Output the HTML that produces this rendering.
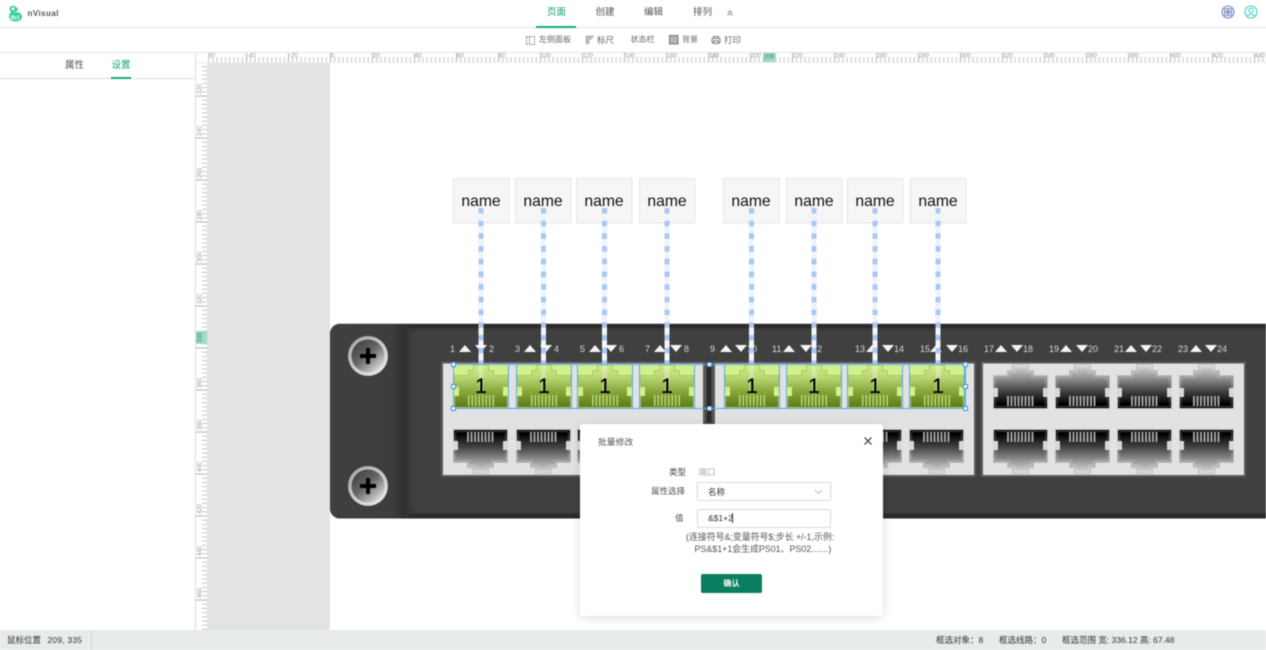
<!DOCTYPE html>
<html lang="zh"><head><meta charset="utf-8"><title>nVisual</title>
<style>
*{box-sizing:border-box}
html,body{margin:0;padding:0;width:1266px;height:650px;overflow:hidden;background:#fff}
body{font-family:"Liberation Sans","Noto Sans CJK SC",sans-serif;position:relative;color:#555}
.a{position:absolute;white-space:nowrap;line-height:1}
#wrap{position:absolute;left:0;top:0;width:1266px;height:650px;filter:blur(.45px);overflow:hidden}
</style></head><body><div id="wrap">

<svg class="a" style="left:0;top:0" width="1266" height="650" viewBox="0 0 1266 650" font-family="Liberation Sans, Noto Sans CJK SC, sans-serif">
<defs>
<pattern id="tT" x="330" y="0" width="4.2" height="10" patternUnits="userSpaceOnUse"><rect width="1" height="10" fill="#c4c4c4"/></pattern>
<pattern id="tTL" x="330" y="0" width="42" height="10" patternUnits="userSpaceOnUse"><rect width="1" height="10" fill="#b4b4b4"/></pattern>
<pattern id="tL" x="0" y="95.5" width="10" height="4.2" patternUnits="userSpaceOnUse"><rect width="10" height="1" fill="#c4c4c4"/></pattern>
<pattern id="tLL" x="0" y="95.5" width="11" height="42" patternUnits="userSpaceOnUse"><rect width="11" height="1" fill="#b4b4b4"/></pattern>
<linearGradient id="gd" x1="0" y1="0" x2="0" y2="1"><stop offset="0" stop-color="#dedede"/><stop offset=".25" stop-color="#a0a0a0"/><stop offset=".6" stop-color="#444"/><stop offset=".9" stop-color="#000"/><stop offset="1" stop-color="#000"/></linearGradient>
<linearGradient id="gg" x1="0" y1="0" x2="0" y2="1"><stop offset="0" stop-color="#d0ee88"/><stop offset=".3" stop-color="#b9d672"/><stop offset=".65" stop-color="#83a337"/><stop offset="1" stop-color="#5a7a14"/></linearGradient>
<linearGradient id="lp" x1="0" y1="0" x2="1" y2="0"><stop offset="0" stop-color="#404040"/><stop offset=".78" stop-color="#3d3d3d"/><stop offset=".93" stop-color="#303030"/><stop offset="1" stop-color="#333"/></linearGradient>
<linearGradient id="sc" x1=".15" y1=".1" x2=".85" y2=".9"><stop offset="0" stop-color="#444"/><stop offset=".45" stop-color="#666"/><stop offset="1" stop-color="#d8d8d8"/></linearGradient>
<linearGradient id="sr" x1=".1" y1="0" x2=".9" y2="1"><stop offset="0" stop-color="#a5a5a5"/><stop offset="1" stop-color="#eee"/></linearGradient>
<symbol id="pd" width="55" height="45" viewBox="0 0 55 45" overflow="visible">
<path d="M.5 11.500H14.500V6.500H19.500V.5H35.500V6.500H40.500V11.500H54.500V44.500H.5Z" fill="url(#gd)" stroke="#c0c0c0"/>
<path d="M2.500 13.500H16.500V8.500H21.500V2.500H33.500V8.500H38.500V13.500H52.500V42.500H2.500Z" fill="none" stroke="#fff" stroke-opacity=".22"/>
<path d="M14 32h2v10h-2zM17.500 32h2v10h-2zM21 32h2v10h-2zM24.500 32h2v10h-2zM28 32h2v10h-2zM31.500 32h2v10h-2zM35 32h2v10h-2zM38.500 32h2v10h-2z" fill="#a0a0a0"/>
<rect x="0" y="24" width="5" height="9" fill="#d8d8d8"/><rect x="50" y="24" width="5" height="9" fill="#d8d8d8"/>
</symbol>
<symbol id="pg" width="56" height="45" viewBox="0 0 56 45" overflow="visible">
<rect x=".5" y=".5" width="55" height="43.500" fill="#d0f28a" stroke="#5aa9ee"/>
<path d="M1.500 11.500H15.500V6.500H20.500V1H35.500V6.500H40.500V11.500H54.500V43.500H1.500Z" fill="url(#gg)" stroke="#a9c76a"/>
<path d="M15 31h1.500v11H15zM18.500 31H20v11h-1.500zM22 31h1.500v11H22zM25.500 31H27v11h-1.500zM29 31h1.500v11H29zM32.500 31H34v11h-1.500zM36 31h1.500v11H36zM39.500 31H41v11h-1.500z" fill="#b8d578"/>
<rect x="1" y="23" width="5" height="9" fill="#d3f28c"/><rect x="50" y="23" width="5" height="9" fill="#d3f28c"/>
</symbol>
<symbol id="sw" width="42" height="42" viewBox="0 0 42 42">
<circle cx="21" cy="21" r="20" fill="url(#sr)" stroke="#777" stroke-width=".5"/>
<circle cx="21" cy="21" r="16.500" fill="url(#sc)"/>
<rect x="13" y="19" width="16" height="4" fill="#000"/><rect x="19" y="13" width="4" height="16" fill="#000"/>
</symbol>
<symbol id="nm" width="57" height="46" viewBox="0 0 57 46">
<rect x=".5" y=".5" width="55.500" height="44.500" fill="#f6f6f6" stroke="#e6e6e6"/>
<text x="28" y="28" font-size="15.700" text-anchor="middle" fill="#111">name</text>
</symbol>
<symbol id="up" width="12" height="7" viewBox="0 0 12 7"><path d="M6 0L12 7H0Z" fill="#f4f4f4"/></symbol>
<symbol id="dn" width="12" height="7" viewBox="0 0 12 7"><path d="M0 0H12L6 7Z" fill="#f4f4f4"/></symbol>
<rect id="hd" x="-2" y="-2" width="4" height="4" fill="#fff" stroke="#2f93ea" stroke-width="1"/>
</defs>

<!-- grey canvas -->
<rect x="207" y="62" width="123" height="568" fill="#e3e3e3"/>

<!-- top ruler -->
<rect x="196" y="52" width="1070" height="10" fill="#fff"/>
<rect x="207" y="57" width="1059" height="5" fill="url(#tT)"/>
<rect x="207" y="52" width="1059" height="10" fill="url(#tTL)"/>
<rect x="763" y="52" width="13" height="10" fill="#9fdcc0"/>
<g font-size="6" fill="#999">
<text x="208" y="57.500">60</text><text x="247" y="57.500">-40</text><text x="289" y="57.500">-20</text><text x="331" y="57.500">0</text><text x="373" y="57.500">20</text><text x="415" y="57.500">40</text><text x="457" y="57.500">60</text><text x="499" y="57.500">80</text><text x="541" y="57.500">100</text><text x="583" y="57.500">120</text><text x="625" y="57.500">140</text><text x="667" y="57.500">160</text><text x="709" y="57.500" fill="#777">180</text><text x="751" y="57.500">200</text><text x="764" y="58.500" fill="#3c8a6c">209</text><text x="793" y="57.500">220</text><text x="835" y="57.500">240</text><text x="877" y="57.500">260</text><text x="919" y="57.500">280</text><text x="961" y="57.500">300</text><text x="1003" y="57.500">320</text><text x="1045" y="57.500">340</text><text x="1087" y="57.500">360</text><text x="1129" y="57.500">380</text><text x="1171" y="57.500">400</text><text x="1213" y="57.500">420</text><text x="1255" y="57.500">440</text>
</g>
<rect x="196" y="62" width="1070" height="1" fill="#ececec"/>

<!-- left ruler -->
<rect x="202" y="63" width="5" height="567" fill="url(#tL)"/>
<rect x="196" y="63" width="11" height="567" fill="url(#tLL)"/>
<rect x="196" y="331" width="11" height="13" fill="#9fdcc0"/>
<g font-size="6" fill="#999" text-anchor="middle">
<text transform="translate(201.500,89) rotate(-90)">220</text>
<text transform="translate(201.500,131) rotate(-90)">240</text>
<text transform="translate(201.500,173) rotate(-90)">260</text>
<text transform="translate(201.500,215) rotate(-90)">280</text>
<text transform="translate(201.500,257) rotate(-90)">300</text>
<text transform="translate(201.500,299) rotate(-90)">320</text>
<text transform="translate(201.500,337.500) rotate(-90)" fill="#3c8a6c">335</text>
<text transform="translate(201.500,383) rotate(-90)">360</text>
<text transform="translate(201.500,425) rotate(-90)">380</text>
<text transform="translate(201.500,467) rotate(-90)">400</text>
<text transform="translate(201.500,509) rotate(-90)">420</text>
<text transform="translate(201.500,551) rotate(-90)">440</text>
<text transform="translate(201.500,593) rotate(-90)">460</text>
</g>
<rect x="195" y="52" width="1" height="578" fill="#dedede"/>

<!-- rack -->
<path d="M1266 323.500H340a10 10 0 0 0-10 10V508a10 10 0 0 0 10 10.500H1266Z" fill="#2b2b2b"/>
<path d="M1266 328H408V514H1266Z" fill="#383838"/>
<path d="M408 324H340a10 10 0 0 0-10 10V508a10 10 0 0 0 10 10.500H408Z" fill="url(#lp)"/>
<path d="M1266 323.500H340a10 10 0 0 0-10 10v.5a10 10 0 0 1 10-10H1266Z" fill="#9a9a9a"/>
<path d="M1266 330H419a8 8 0 0 0-8 8V504a8 8 0 0 0 8 8H1266Z" fill="#404040"/>
<use href="#sw" x="347" y="335"/><use href="#sw" x="347" y="465"/>

<!-- port blocks -->
<rect x="442" y="362.500" width="262" height="113.500" fill="#e2e2e2" stroke="#5a5a5a" stroke-width="2"/>
<rect x="714" y="362.500" width="261" height="113.500" fill="#e2e2e2" stroke="#5a5a5a" stroke-width="2"/>
<rect x="982" y="362.500" width="263" height="113.500" fill="#e2e2e2" stroke="#5a5a5a" stroke-width="2"/>
<rect x="704" y="362" width="10" height="60" fill="#555"/>
<rect x="706.500" y="362" width="5" height="60" fill="#2b2b2b"/>

<!-- green ports -->
<use href="#pg" x="453" y="364"/><use href="#pg" x="516" y="364"/><use href="#pg" x="577" y="364"/><use href="#pg" x="639" y="364"/>
<use href="#pg" x="724" y="364"/><use href="#pg" x="786" y="364"/><use href="#pg" x="847" y="364"/><use href="#pg" x="909" y="364"/>
<!-- dark top ports -->
<use href="#pd" x="993" y="364"/><use href="#pd" x="1055" y="364"/><use href="#pd" x="1117" y="364"/><use href="#pd" x="1179" y="364"/>
<!-- dark bottom ports -->
<g transform="translate(0,903) scale(1,-1)">
<use href="#pd" x="453" y="429"/><use href="#pd" x="516" y="429"/><use href="#pd" x="577" y="429"/><use href="#pd" x="639" y="429"/>
<use href="#pd" x="724" y="429"/><use href="#pd" x="786" y="429"/><use href="#pd" x="847" y="429"/><use href="#pd" x="909" y="429"/>
<use href="#pd" x="993" y="429"/><use href="#pd" x="1055" y="429"/><use href="#pd" x="1117" y="429"/><use href="#pd" x="1179" y="429"/>
</g>

<!-- labels -->
<g font-size="9" fill="#d8d8d8">
<text x="450" y="352">1</text><text x="489" y="352">2</text>
<text x="515" y="352">3</text><text x="554" y="352">4</text>
<text x="580" y="352">5</text><text x="619" y="352">6</text>
<text x="645" y="352">7</text><text x="684" y="352">8</text>
<text x="710" y="352">9</text><text x="747" y="352">10</text>
<text x="772" y="352">11</text><text x="812" y="352">12</text>
<text x="855" y="352">13</text><text x="894" y="352">14</text>
<text x="920" y="352">15</text><text x="958" y="352">16</text>
<text x="984" y="352">17</text><text x="1023" y="352">18</text>
<text x="1049" y="352">19</text><text x="1088" y="352">20</text>
<text x="1114" y="352">21</text><text x="1152" y="352">22</text>
<text x="1178" y="352">23</text><text x="1217" y="352">24</text>
</g>
<use href="#up" x="459" y="345"/><use href="#dn" x="475" y="345"/>
<use href="#up" x="524" y="345"/><use href="#dn" x="540" y="345"/>
<use href="#up" x="589" y="345"/><use href="#dn" x="605" y="345"/>
<use href="#up" x="654" y="345"/><use href="#dn" x="670" y="345"/>
<use href="#up" x="720" y="345"/><use href="#dn" x="735" y="345"/>
<use href="#up" x="783" y="345"/><use href="#dn" x="800" y="345"/>
<use href="#up" x="866" y="345"/><use href="#dn" x="882" y="345"/>
<use href="#up" x="930" y="345"/><use href="#dn" x="946" y="345"/>
<use href="#up" x="995" y="345"/><use href="#dn" x="1011" y="345"/>
<use href="#up" x="1060" y="345"/><use href="#dn" x="1076" y="345"/>
<use href="#up" x="1125" y="345"/><use href="#dn" x="1140" y="345"/>
<use href="#up" x="1190" y="345"/><use href="#dn" x="1205" y="345"/>

<!-- name boxes -->
<use href="#nm" x="453" y="178"/><use href="#nm" x="515" y="178"/><use href="#nm" x="576" y="178"/><use href="#nm" x="639" y="178"/>
<use href="#nm" x="723" y="178"/><use href="#nm" x="786" y="178"/><use href="#nm" x="847" y="178"/><use href="#nm" x="910" y="178"/>

<!-- links -->
<g stroke-width="5" fill="none">
<g stroke="#eef4fd">
<path d="M481 208V324M543.500 208V324M604.500 208V324M667 208V324M751.500 208V324M814 208V324M875 208V324M938 208V324"/>
</g>
<g stroke="#fff" stroke-opacity=".95">
<path d="M481 324V364M543.500 324V364M604.500 324V364M667 324V364M751.500 324V364M814 324V364M875 324V364M938 324V364"/>
</g>
<g stroke="#fff" stroke-opacity=".28">
<path d="M481 364V394M543.500 364V394M604.500 364V394M667 364V394M751.500 364V394M814 364V394M875 364V394M938 364V394"/>
</g>
<g stroke="#a9c8f3" stroke-dasharray="5.500 7.200">
<path d="M481 208V364M543.500 208V364M604.500 208V364M667 208V364M751.500 208V364M814 208V364M875 208V364M938 208V364"/>
</g>
</g>

<!-- port numbers -->
<g font-size="21" text-anchor="middle" fill="#000" stroke="#000" stroke-width=".25">
<text x="481" y="393">1</text><text x="544" y="393">1</text><text x="605" y="393">1</text><text x="667" y="393">1</text>
<text x="752" y="393">1</text><text x="814" y="393">1</text><text x="875" y="393">1</text><text x="938" y="393">1</text>
</g>

<!-- selection -->
<rect x="453.500" y="364.500" width="512" height="44" fill="none" stroke="#5aa9ee"/>
<use href="#hd" x="453.500" y="364.500"/><use href="#hd" x="453.500" y="386.500"/><use href="#hd" x="453.500" y="408.500"/>
<use href="#hd" x="709.500" y="364.500"/><use href="#hd" x="709.500" y="408.500"/>
<use href="#hd" x="965.500" y="364.500"/><use href="#hd" x="965.500" y="386.500"/><use href="#hd" x="965.500" y="408.500"/>
</svg>

<!-- top bar -->
<div class="a" style="left:0;top:0;width:1266px;height:28px;background:#fff;border-bottom:1px solid #e4e4e4"></div>
<svg class="a" style="left:8px;top:5px" width="15" height="17" viewBox="0 0 15 17">
<path d="M2.500 1.500C4.500 .3 7.500 .8 8.500 2.500C10 3 10.500 4.500 9.500 5.800C8 6.500 6.500 7 6 7.800C9 6.500 13.800 7.500 14 11.500C14 14.800 11 16.500 7.500 16.500C3.800 16.500 1 14.500 1 11.500C1 9.500 2 8 3.200 7C1.500 5.500 1 3 2.500 1.500Z" fill="#3fcf9f"/>
<circle cx="5" cy="3.800" r="1.400" fill="#fff"/>
<circle cx="4.800" cy="12.500" r="1.500" fill="none" stroke="#fff" stroke-width=".9"/>
<path d="M8 14.500V11M10.500 14.500V10" stroke="#fff" stroke-width=".9" fill="none"/>
</svg>
<div class="a" style="left:27.500px;top:10px;font-size:8px;font-weight:bold;color:#555;letter-spacing:.45px">nVisual</div>
<div class="a" style="left:547px;top:8px;font-size:9.500px;color:#12a06f">页面</div>
<div class="a" style="left:595.500px;top:8px;font-size:9.500px;color:#555">创建</div>
<div class="a" style="left:644px;top:8px;font-size:9.500px;color:#555">编辑</div>
<div class="a" style="left:693px;top:8px;font-size:9.500px;color:#555">排列</div>
<div class="a" style="left:536px;top:25.500px;width:40px;height:2px;background:#19a877"></div>
<svg class="a" style="left:727px;top:10px" width="6" height="6" viewBox="0 0 6 6"><path d="M.5 3L3 .8L5.500 3M.5 5.500L3 3.300L5.500 5.500" fill="none" stroke="#777" stroke-width=".8"/></svg>
<svg class="a" style="left:1221px;top:5px" width="14" height="14" viewBox="0 0 14 14"><circle cx="7" cy="7" r="6" fill="#eef0f8" stroke="#7d8bc7" stroke-width="1.100"/><g fill="none" stroke="#7d8bc7" stroke-width=".9"><rect x="3.600" y="3.800" width="3" height="2.800"/><rect x="7.600" y="3.800" width="3" height="2.800"/><rect x="3.600" y="7.600" width="3" height="2.800"/><rect x="7.600" y="7.600" width="3" height="2.800"/></g></svg>
<svg class="a" style="left:1244px;top:5px" width="14" height="14" viewBox="0 0 14 14"><circle cx="7" cy="7" r="6" fill="#fff" stroke="#3fd0b5" stroke-width="1.100"/><circle cx="7" cy="5.300" r="2.200" fill="none" stroke="#3fd0b5"/><path d="M3 11.200C3.800 9 10.200 9 11 11.200" fill="none" stroke="#3fd0b5"/></svg>

<!-- toolbar -->
<div class="a" style="left:0;top:28px;width:1266px;height:25px;background:#fff;border-bottom:1px solid #e4e4e4"></div>
<svg class="a" style="left:526px;top:36px" width="9" height="9" viewBox="0 0 9 9"><rect x=".5" y=".5" width="8" height="8" fill="none" stroke="#777" stroke-dasharray="1.500 1"/><path d="M3.500 1V8" stroke="#777" stroke-dasharray="1.500 1"/></svg>
<div class="a" style="left:539px;top:36px;font-size:8px;color:#666">左侧面板</div>
<svg class="a" style="left:585px;top:35px" width="10" height="10" viewBox="0 0 10 10"><path d="M1.500 9V1.500H9M3.500 9V3.500H7" fill="none" stroke="#777" stroke-width="1"/></svg>
<div class="a" style="left:597px;top:36px;font-size:8.500px;color:#666">标尺</div>
<div class="a" style="left:630.500px;top:36px;font-size:8px;color:#666">状态栏</div>
<svg class="a" style="left:669px;top:35px" width="10" height="10" viewBox="0 0 10 10"><rect x=".5" y=".5" width="8.500" height="8.500" fill="#b5b5b5" stroke="#777"/></svg>
<div class="a" style="left:682px;top:36px;font-size:8px;color:#666">背景</div>
<svg class="a" style="left:711px;top:35px" width="10" height="10" viewBox="0 0 10 10"><path d="M2.500 3V1.500H7.500V3M2.500 7.500H1V3.500H9V7.500H7.500M2.500 6H7.500V8.500H2.500Z" fill="none" stroke="#777" stroke-width=".9"/></svg>
<div class="a" style="left:724px;top:36px;font-size:8.500px;color:#666">打印</div>

<!-- sidebar -->
<div class="a" style="left:0;top:77.500px;width:195px;height:1px;background:#dcdcdc"></div>
<div class="a" style="left:65px;top:60.500px;font-size:9.500px;color:#555">属性</div>
<div class="a" style="left:111.500px;top:60.500px;font-size:9.500px;color:#12a06f">设置</div>
<div class="a" style="left:111px;top:77px;width:20px;height:1.500px;background:#19a877"></div>

<!-- status -->
<div class="a" style="left:0;top:630px;width:1266px;height:20px;background:#e8ebeb"></div>
<div class="a" style="left:91px;top:630px;width:1px;height:20px;background:#cfd2d2"></div>
<div class="a" style="left:7px;top:635.500px;font-size:8.500px;color:#333">鼠标位置</div>
<div class="a" style="left:47.500px;top:635.500px;font-size:8.500px;color:#333;letter-spacing:.2px">209, 335</div>
<div class="a" style="left:936px;top:635.500px;font-size:8.500px;color:#333">框选对象：8</div>
<div class="a" style="left:999px;top:635.500px;font-size:8.500px;color:#333">框选线路：0</div>
<div class="a" style="left:1062px;top:635.500px;font-size:8.500px;color:#333">框选范围 宽: 336.12 高: 67.48</div>

<!-- dialog -->
<div class="a" style="left:580px;top:424px;width:303px;height:192px;background:#fff;border-radius:3px;box-shadow:0 2px 10px rgba(0,0,0,.14)"></div>
<div class="a" style="left:598px;top:437.500px;font-size:8.800px;color:#555">批量修改</div>
<svg class="a" style="left:863px;top:436px" width="10" height="10" viewBox="0 0 10 10"><path d="M1.500 1.500L8.500 8.500M8.500 1.500L1.500 8.500" stroke="#333" stroke-width="1.200"/></svg>
<div class="a" style="left:669px;top:467.500px;font-size:8.500px;color:#444">类型</div>
<div class="a" style="left:698.500px;top:467.500px;font-size:8.500px;color:#aaa">端口</div>
<div class="a" style="left:651px;top:486.500px;font-size:8.500px;color:#555">属性选择</div>
<div class="a" style="left:697px;top:482px;width:134px;height:19px;border:1px solid #d9d9d9;border-radius:2px;background:#fff"></div>
<div class="a" style="left:708px;top:487.500px;font-size:8.500px;color:#333">名称</div>
<svg class="a" style="left:814px;top:489px" width="9" height="6" viewBox="0 0 9 6"><path d="M.8 1L4.500 4.500L8.200 1" fill="none" stroke="#bbb" stroke-width=".9"/></svg>
<div class="a" style="left:675px;top:513.500px;font-size:8.500px;color:#555">值</div>
<div class="a" style="left:697px;top:509px;width:134px;height:19px;border:1px solid #d9d9d9;border-radius:2px;background:#fff"></div>
<div class="a" style="left:708px;top:514px;font-size:8.500px;color:#333">&amp;$1+2</div>
<div class="a" style="left:732px;top:513px;width:1px;height:10px;background:#333"></div>
<div class="a" style="left:686px;top:533px;font-size:8.900px;color:#555">(连接符号&amp;;变量符号$;步长 +/-1,示例:</div>
<div class="a" style="left:694.500px;top:545px;font-size:8.900px;color:#555">PS&amp;$1+1会生成PS01、PS02.......)</div>
<div class="a" style="left:701px;top:574px;width:61px;height:19px;background:#0a7f5f;border-radius:2px;color:#fff;font-size:8px;font-weight:bold;text-align:center;line-height:19px">确认</div>

</div></body></html>
